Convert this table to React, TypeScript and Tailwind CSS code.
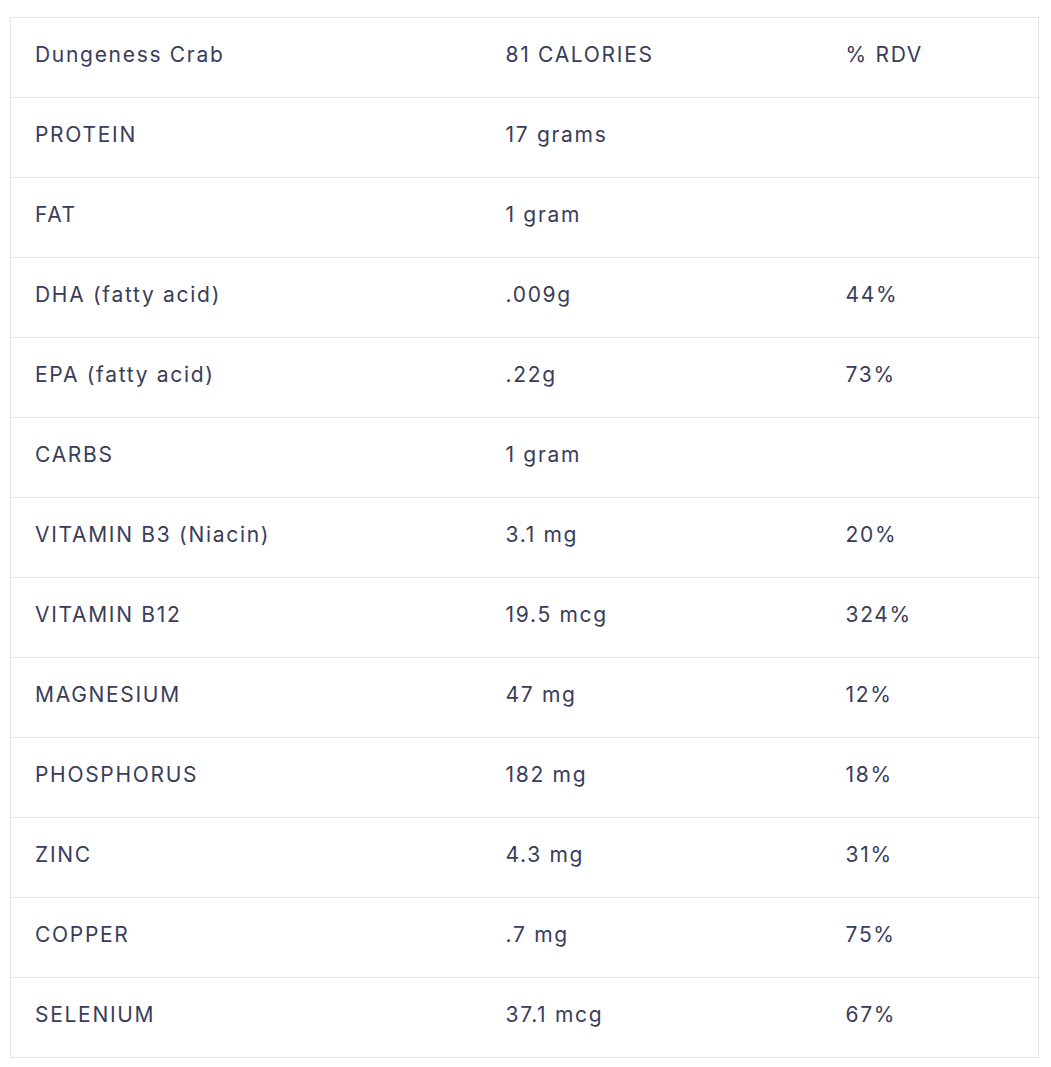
const rows: [string, string, string][] = [
  ["Dungeness Crab", "81 CALORIES", "% RDV"],
  ["PROTEIN", "17 grams", ""],
  ["FAT", "1 gram", ""],
  ["DHA (fatty acid)", ".009g", "44%"],
  ["EPA (fatty acid)", ".22g", "73%"],
  ["CARBS", "1 gram", ""],
  ["VITAMIN B3 (Niacin)", "3.1 mg", "20%"],
  ["VITAMIN B12", "19.5 mcg", "324%"],
  ["MAGNESIUM", "47 mg", "12%"],
  ["PHOSPHORUS", "182 mg", "18%"],
  ["ZINC", "4.3 mg", "31%"],
  ["COPPER", ".7 mg", "75%"],
  ["SELENIUM", "37.1 mcg", "67%"],
];

export default function App() {
  return (
    <div className="bg-white min-h-screen pt-[17px] pl-[10px] pr-[12px] font-['Inter',sans-serif] text-[21px] tracking-[1.7px] text-[#373d5b]">
      <table className="w-full border-collapse border border-[#e6e6e6]">
        <tbody>
          {rows.map(([name, amount, rdv]) => (
            <tr key={name} className="h-[80px] border-b border-[#e6e6e6]">
              <td className="w-[471px] pl-6 pr-6 pb-[5px] align-middle">{name}</td>
              <td className="w-[340px] pl-6 pr-6 pb-[5px] align-middle">{amount}</td>
              <td className="pl-6 pr-6 pb-[5px] align-middle">{rdv}</td>
            </tr>
          ))}
        </tbody>
      </table>
    </div>
  );
}
